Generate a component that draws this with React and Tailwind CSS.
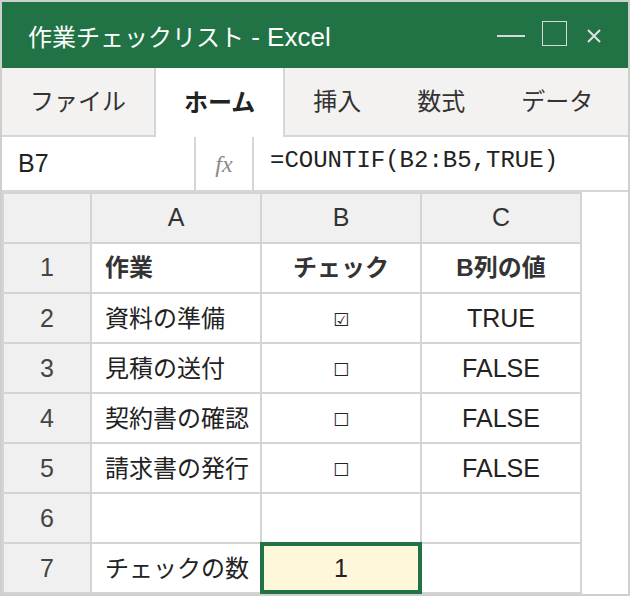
import React from "react";

const rows = [
  { n: "2", task: "資料の準備", box: "☑", val: "TRUE" },
  { n: "3", task: "見積の送付", box: "☐", val: "FALSE" },
  { n: "4", task: "契約書の確認", box: "☐", val: "FALSE" },
  { n: "5", task: "請求書の発行", box: "☐", val: "FALSE" },
];

const head = "bg-[#f0f0f0] flex items-center justify-center text-[#333]";
const cell = "bg-white flex items-center whitespace-nowrap";

function WindowControls() {
  return (
    <div className="flex items-center">
      <div className="w-[28px] h-[2px] bg-[#d8d8d8] mt-[2px]" />
      <div className="w-[25px] h-[25px] border-[1.5px] border-[#d8d8d8] ml-[17px] mb-[4px]" />
      <svg width="14" height="14" viewBox="0 0 14 14" className="ml-[20px] mt-[2px]">
        <path d="M1 1L13 13M13 1L1 13" stroke="#e0e0e0" strokeWidth="2" />
      </svg>
    </div>
  );
}

export default function App() {
  return (
    <div className="w-[630px] h-[596px] border-2 border-[#cfcfcf] bg-white flex flex-col font-['Liberation_Sans','Noto_Sans_CJK_JP',sans-serif] text-[#333]">
      {/* title bar */}
      <div className="h-[66px] shrink-0 bg-[#217346] flex items-center justify-between pl-[26px] pr-[27px]">
        <span className="text-white text-[24px] leading-none mt-[4px]">
          作業チェックリスト<span className="text-[26px]"> - Excel</span>
        </span>
        <WindowControls />
      </div>

      {/* ribbon tabs */}
      <div className="h-[69px] shrink-0 bg-[#f3f2f1] border-b-2 border-[#d6d6d6] flex text-[24px] text-[#333]">
        <div className="px-7 flex items-center">ファイル</div>
        <div className="px-7 flex items-center bg-white border-x-2 border-[#d6d6d6] font-bold text-[#222] -mb-[2px]">
          ホーム
        </div>
        <div className="px-7 flex items-center">挿入</div>
        <div className="px-7 flex items-center">数式</div>
        <div className="px-7 flex items-center">データ</div>
      </div>

      {/* formula bar */}
      <div className="h-[55px] shrink-0 border-b-2 border-[#d6d6d6] flex">
        <div className="w-[194px] border-r-2 border-[#d6d6d6] flex items-center pl-4 text-[25px] text-[#222]">
          B7
        </div>
        <div className="w-[58px] border-r-2 border-[#d6d6d6] flex items-center justify-center font-['Liberation_Serif',serif] italic text-[24px] text-[#8a8a8a]">
          fx
        </div>
        <div className="flex-1 flex items-center pl-4 pb-[6px] font-['Liberation_Mono',monospace] text-[24px] text-[#222]">
          =COUNTIF(B2:B5,TRUE)
        </div>
      </div>

      {/* sheet */}
      <div className="flex-1">
        <div className="w-[580px] grid grid-cols-[86px_168px_158px_158px] grid-rows-[repeat(8,48px)] gap-[2px] p-[2px] bg-[#d4d4d4] text-[24px]">
          <div className={head} />
          <div className={head + " text-[25px]"}>A</div>
          <div className={head + " text-[25px]"}>B</div>
          <div className={head + " text-[25px]"}>C</div>

          <div className={head + " text-[25px] text-[#444]"}>1</div>
          <div className={cell + " pl-[13px] font-bold text-[#333]"}>作業</div>
          <div className={cell + " justify-center font-bold text-[#333]"}>チェック</div>
          <div className={cell + " justify-center font-bold text-[#333]"}>B列の値</div>

          {rows.map((r) => (
            <React.Fragment key={r.n}>
              <div className={head + " text-[25px] text-[#444] pt-[2px]"}>{r.n}</div>
              <div className={cell + " pl-[13px] text-[#222] pt-[2px]"}>{r.task}</div>
              <div className={cell + " justify-center font-['DejaVu_Sans',sans-serif] text-[18px] text-[#222] pt-[2px]"}>
                {r.box}
              </div>
              <div className={cell + " justify-center text-[25px] text-[#222] pt-[2px]"}>{r.val}</div>
            </React.Fragment>
          ))}

          <div className={head + " text-[25px] text-[#444] pt-[2px]"}>6</div>
          <div className={cell} />
          <div className={cell} />
          <div className={cell} />

          <div className={head + " text-[25px] text-[#444] pt-[2px]"}>7</div>
          <div className={cell + " pl-[13px] text-[#222] pt-[2px]"}>チェックの数</div>
          <div className="relative z-10 bg-[#fff7d9] flex items-center justify-center text-[25px] text-[#222] pt-[2px] outline-2 outline-solid outline-[#217346] shadow-[inset_0_0_0_2px_#217346]">
            1
          </div>
          <div className={cell} />
        </div>
      </div>
    </div>
  );
}
